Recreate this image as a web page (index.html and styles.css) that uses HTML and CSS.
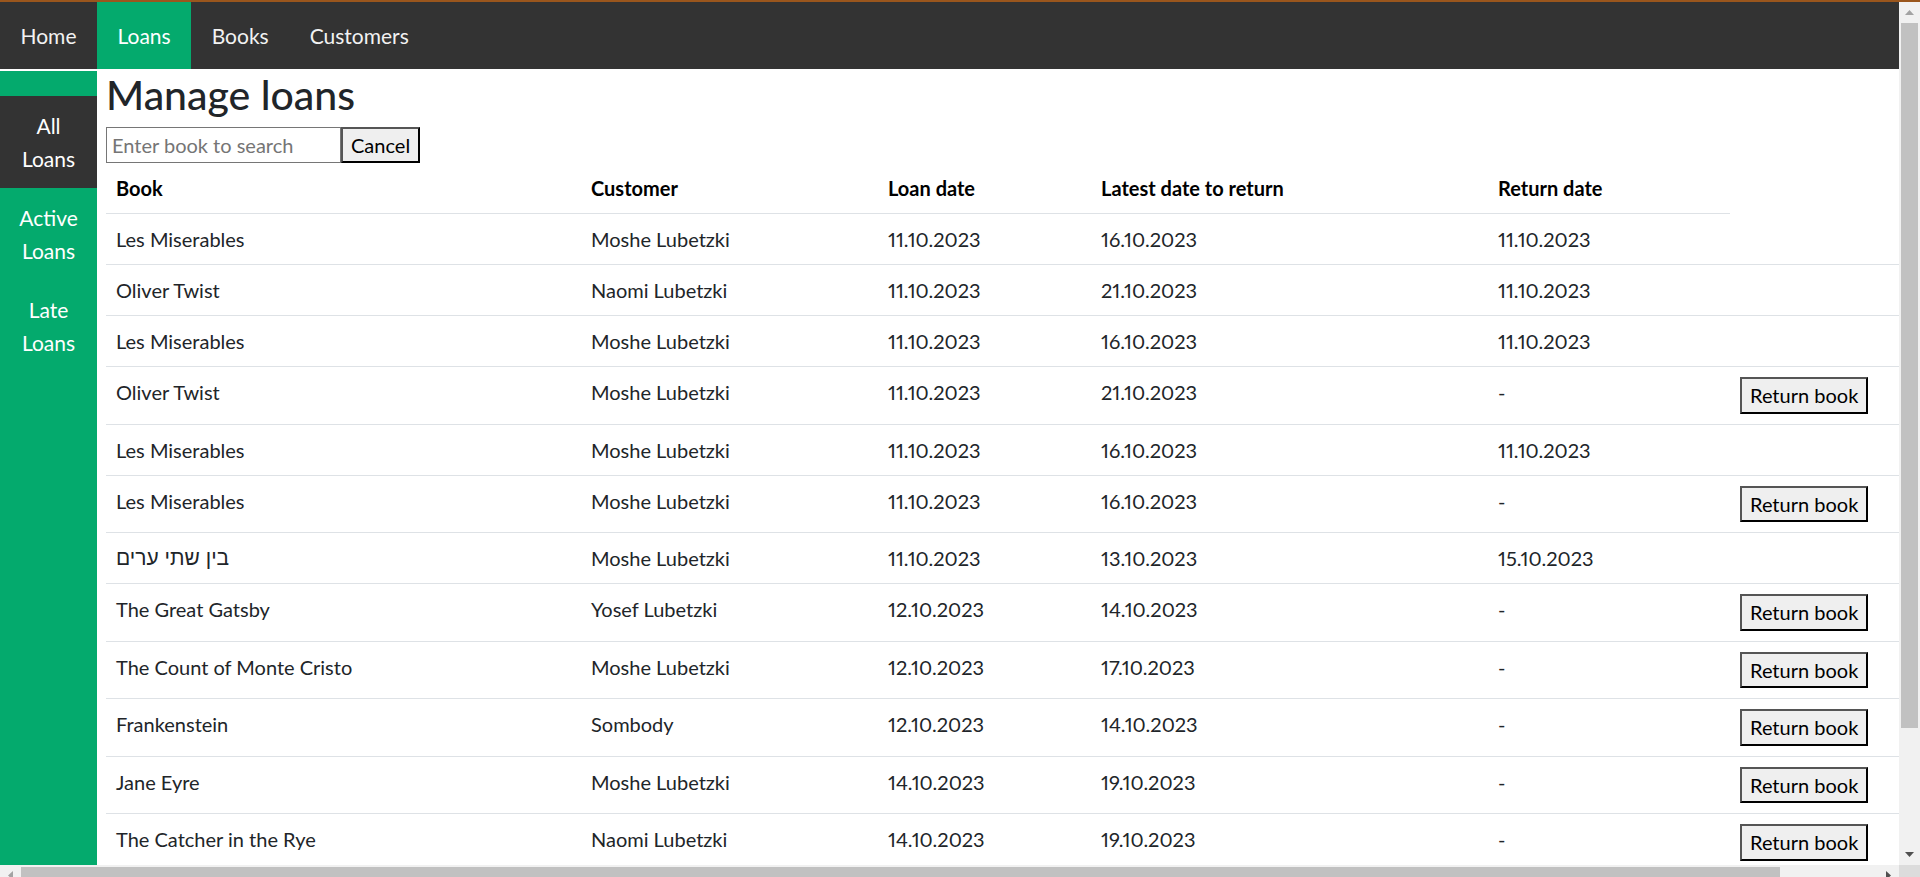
FILE: index.html
```
<!DOCTYPE html>
<html lang="en">
<head>
<meta charset="utf-8">
<title>Manage loans</title>
<link rel="stylesheet" href="styles.css">
</head>
<body>
<div class="topline"></div>
<div class="window">
  <div class="viewport">
    <div class="page">
      <nav class="topnav">
        <a class="topnav-link" href="#">Home</a>
        <a class="topnav-link active" href="#">Loans</a>
        <a class="topnav-link" href="#">Books</a>
        <a class="topnav-link" href="#">Customers</a>
      </nav>
      <div class="layout">
        <aside class="sidenav">
          <a class="sidenav-link active" href="#">All Loans</a>
          <a class="sidenav-link" href="#">Active Loans</a>
          <a class="sidenav-link" href="#">Late Loans</a>
        </aside>
        <main class="main">
          <h1 class="title">Manage loans</h1>
          <form class="search">
            <input class="search-input" type="text" placeholder="Enter book to search">
            <button class="btn" type="button">Cancel</button>
          </form>
          <table class="loans">
            <colgroup>
              <col class="c-book"><col class="c-customer"><col class="c-loan"><col class="c-latest"><col class="c-return"><col class="c-action">
            </colgroup>
            <thead>
              <tr><th>Book</th><th>Customer</th><th>Loan date</th><th>Latest date to return</th><th>Return date</th></tr>
            </thead>
            <tbody>
              <tr><td>Les Miserables</td><td>Moshe Lubetzki</td><td>11.10.2023</td><td>16.10.2023</td><td>11.10.2023</td><td></td></tr>
              <tr><td>Oliver Twist</td><td>Naomi Lubetzki</td><td>11.10.2023</td><td>21.10.2023</td><td>11.10.2023</td><td></td></tr>
              <tr><td>Les Miserables</td><td>Moshe Lubetzki</td><td>11.10.2023</td><td>16.10.2023</td><td>11.10.2023</td><td></td></tr>
              <tr><td>Oliver Twist</td><td>Moshe Lubetzki</td><td>11.10.2023</td><td>21.10.2023</td><td>-</td><td><button class="btn" type="button">Return book</button></td></tr>
              <tr><td>Les Miserables</td><td>Moshe Lubetzki</td><td>11.10.2023</td><td>16.10.2023</td><td>11.10.2023</td><td></td></tr>
              <tr><td>Les Miserables</td><td>Moshe Lubetzki</td><td>11.10.2023</td><td>16.10.2023</td><td>-</td><td><button class="btn" type="button">Return book</button></td></tr>
              <tr><td><span class="he" lang="he">בין שתי ערים</span></td><td>Moshe Lubetzki</td><td>11.10.2023</td><td>13.10.2023</td><td>15.10.2023</td><td></td></tr>
              <tr><td>The Great Gatsby</td><td>Yosef Lubetzki</td><td>12.10.2023</td><td>14.10.2023</td><td>-</td><td><button class="btn" type="button">Return book</button></td></tr>
              <tr><td>The Count of Monte Cristo</td><td>Moshe Lubetzki</td><td>12.10.2023</td><td>17.10.2023</td><td>-</td><td><button class="btn" type="button">Return book</button></td></tr>
              <tr><td>Frankenstein</td><td>Sombody</td><td>12.10.2023</td><td>14.10.2023</td><td>-</td><td><button class="btn" type="button">Return book</button></td></tr>
              <tr><td>Jane Eyre</td><td>Moshe Lubetzki</td><td>14.10.2023</td><td>19.10.2023</td><td>-</td><td><button class="btn" type="button">Return book</button></td></tr>
              <tr><td>The Catcher in the Rye</td><td>Naomi Lubetzki</td><td>14.10.2023</td><td>19.10.2023</td><td>-</td><td><button class="btn" type="button">Return book</button></td></tr>
            </tbody>
          </table>
        </main>
      </div>
    </div>
  </div>

  <div class="vscroll">
    <span class="sb-btn">
      <svg width="9" height="5" viewBox="0 0 9 5"><path d="M0 5h9L4.5 0z" fill="#a3a3a3"/></svg>
    </span>
    <div class="vtrack"><div class="vthumb"></div></div>
    <span class="sb-btn">
      <svg width="9" height="5" viewBox="0 0 9 5"><path d="M0 0h9L4.5 5z" fill="#505050"/></svg>
    </span>
  </div>

  <div class="hscroll">
    <span class="sb-btn">
      <svg width="5" height="9" viewBox="0 0 5 9"><path d="M5 0v9L0 4.5z" fill="#a3a3a3"/></svg>
    </span>
    <div class="htrack"><div class="hthumb"></div></div>
    <span class="sb-btn">
      <svg width="5" height="9" viewBox="0 0 5 9"><path d="M0 0v9L5 4.5z" fill="#505050"/></svg>
    </span>
  </div>
  <div class="corner"></div>
</div>
</body>
</html>
```
FILE: styles.css
```
html, body {
  margin: 0;
  height: 877px;
  overflow: hidden;
  background: #fff;
}

body {
  font-family: Lato, "Noto Sans", "DejaVu Sans", sans-serif;
  color: #212529;
}

.topline {
  height: 2px;
  background: #9a561d;
}

/* browser window: content + scrollbars */
.window {
  display: grid;
  grid-template-columns: 1899px 21px;
  grid-template-rows: 863px 21px;
}

.viewport {
  overflow: hidden;
}

.vscroll {
  display: flex;
  flex-direction: column;
  background: #f1f1f1;
}
.hscroll {
  display: flex;
  background: #f1f1f1;
}
.sb-btn {
  flex: none;
  display: flex;
  align-items: center;
  justify-content: center;
  width: 21px;
  height: 21px;
}
.vtrack {
  flex: 1;
  padding: 0 2px;
}
.vthumb {
  height: 705px;
  background: #c1c1c1;
}
.htrack {
  flex: 1;
  padding: 2px 0;
}
.hthumb {
  width: 1759px;
  height: 17px;
  background: #c1c1c1;
}
.corner {
  background: #dcdcdc;
}

.page {
  width: 2005px;
}

/* top navigation */
.topnav {
  display: flex;
  height: 67px;
  background: #333;
}
.topnav-link {
  display: flex;
  align-items: center;
  padding: 0 20.5px;
  color: #f2f2f2;
  font-size: 21px;
  text-decoration: none;
}
.topnav-link.active {
  background: #04aa6d;
  color: #fff;
}

/* layout */
.layout {
  display: flex;
  align-items: stretch;
}

.sidenav {
  flex: none;
  width: 97px;
  margin-top: 2px;
  padding-top: 25px;
  background: #04aa6d;
  display: flex;
  flex-direction: column;
}
.sidenav-link {
  display: block;
  padding: 13px 16px;
  color: #fff;
  font-size: 21px;
  line-height: 33px;
  text-align: center;
  text-decoration: none;
}
.sidenav-link.active {
  background: #333;
}

.main {
  flex: none;
  width: 1899px;
  margin-left: 9px;
  padding-top: 2px;
  padding-bottom: 137px;
}

.title {
  margin: 0 0 8px;
  font-size: 41px;
  line-height: 48px;
  font-weight: 500;
  color: #212529;
}

.search {
  display: flex;
  margin: 0;
}
.search-input {
  box-sizing: border-box;
  width: 235px;
  height: 36px;
  margin: 0;
  padding: 0 5px;
  border: 1px solid #767676;
  font-family: inherit;
  font-size: 20px;
  color: #212529;
}
.search-input::placeholder {
  color: #757575;
}

.btn {
  box-sizing: border-box;
  height: 36px;
  margin: 0;
  padding: 0 8px;
  border: 2px solid;
  border-color: #555 #000 #000 #555;
  background: #efefef;
  font-family: inherit;
  font-size: 20px;
  color: #000;
}

/* table */
.loans {
  width: 1899px;
  table-layout: fixed;
  border-collapse: collapse;
  font-size: 20px;
  line-height: 30px;
  font-variant-numeric: proportional-nums;
}
.c-book { width: 475px; }
.c-customer { width: 297px; }
.c-loan { width: 213px; }
.c-latest { width: 397px; }
.c-return { width: 242px; }
.c-action { width: 275px; }

.loans th,
.loans td {
  padding: 10px;
  text-align: left;
  vertical-align: top;
  border-bottom: 1px solid #dee2e6;
  white-space: nowrap;
}
.loans th {
  font-weight: 700;
  color: #000;
}
.loans td .btn {
  display: block;
  height: 36.5px;
}
.he {
  display: inline-block;
  vertical-align: top;
  height: 30px;
  line-height: 30px;
  font-family: "Liberation Sans", "DejaVu Sans", sans-serif;
  font-size: 21px;
}
```
